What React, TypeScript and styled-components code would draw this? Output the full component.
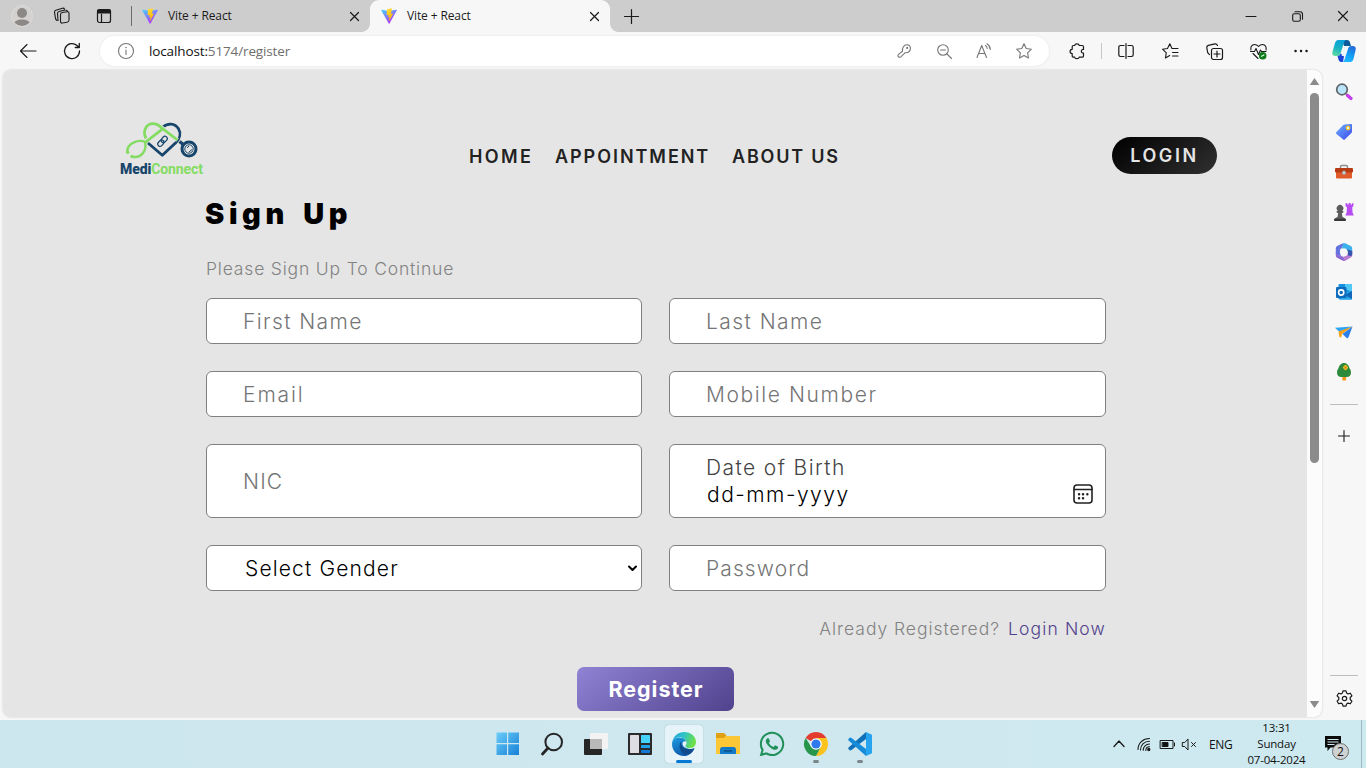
import React from "react";
import styled, { createGlobalStyle } from "styled-components";
import { FaWhatsapp } from "react-icons/fa";

const ui = `"Open Sans", "Noto Sans", sans-serif`;
const brand = `Inter, "Liberation Sans", sans-serif`;

const GlobalStyle = createGlobalStyle`
  * { box-sizing: border-box; }
  body { margin: 0; overflow: hidden; }
  svg { display: block; overflow: visible; flex: none; }
`;

const Screen = styled.div`
  width: 1366px;
  height: 768px;
  display: flex;
  flex-direction: column;
  background: #f7f7f7;
  font-family: ${ui};
  color: #111;
`;

/* ---------- browser chrome ---------- */

const TabStrip = styled.div`
  display: flex;
  align-items: center;
  height: 32px;
  flex: none;
  background: #cdcdcd;
`;

const Slot = styled.div<{ $w: number }>`
  width: ${(p) => p.$w}px;
  height: 100%;
  flex: none;
  display: flex;
  align-items: center;
  justify-content: center;
`;

const Spacer = styled.div`
  flex: 1;
`;

const VLine = styled.div<{ $h: number; $c: string }>`
  width: 1px;
  height: ${(p) => p.$h}px;
  background: ${(p) => p.$c};
`;

const Tab = styled.div<{ $active?: boolean }>`
  position: relative;
  display: flex;
  align-items: center;
  height: 32px;
  width: ${(p) => (p.$active ? 240 : 236)}px;
  padding: 0 10px 0 ${(p) => (p.$active ? 11 : 8)}px;
  background: ${(p) => (p.$active ? "#f7f7f7" : "transparent")};
  border-radius: 9px 9px 0 0;
  ${(p) =>
    p.$active &&
    `
    &::before, &::after {
      content: "";
      position: absolute;
      bottom: 0;
      width: 8px;
      height: 8px;
    }
    &::before {
      left: -8px;
      background: radial-gradient(circle at 0 0, transparent 7.5px, #f7f7f7 8px);
    }
    &::after {
      right: -8px;
      background: radial-gradient(circle at 100% 0, transparent 7.5px, #f7f7f7 8px);
    }
  `}
`;

const TabTitle = styled.span`
  flex: 1;
  margin-left: 10px;
  font-size: 12px;
  letter-spacing: -0.12px;
  line-height: 16px;
  color: #1b1b1b;
`;

const Toolbar = styled.div`
  display: flex;
  align-items: center;
  height: 38px;
  flex: none;
  background: #f7f7f7;
`;

const AddressBar = styled.div`
  display: flex;
  align-items: center;
  width: 949px;
  height: 30px;
  margin-left: 12px;
  margin-right: 6px;
  padding: 0 5px 0 18px;
  border-radius: 15px;
  background: #fff;
  box-shadow: 0 0 3px rgba(0, 0, 0, 0.08);
`;

const Url = styled.div`
  flex: 1;
  margin-left: 15px;
  font-size: 13.5px;
  letter-spacing: -0.13px;
  line-height: 18px;
  color: #6e6e6e;
  b {
    font-weight: 400;
    color: #111;
  }
`;

const Body = styled.div`
  display: flex;
  height: 650px;
  flex: none;
  padding-left: 3px;
`;

const Frame = styled.div`
  display: flex;
  width: 1319px;
  height: 647px;
  border-radius: 8px;
  overflow: hidden;
  background: #fcfcfc;
  box-shadow: 0 0 2px rgba(0, 0, 0, 0.22);
`;

const Scrollbar = styled.div`
  width: 15px;
  display: flex;
  flex-direction: column;
  align-items: center;
  padding: 8px 0 9px;
`;

const Thumb = styled.div`
  width: 9px;
  height: 370px;
  margin-top: 8px;
  border-radius: 5px;
  background: #8b8b8b;
`;

const SideBar = styled.div`
  width: 44px;
  display: flex;
  flex-direction: column;
  align-items: center;
  padding-top: 2px;
`;

const SideItem = styled.div<{ $h?: number }>`
  height: ${(p) => p.$h ?? 40}px;
  display: flex;
  align-items: center;
  justify-content: center;
`;

const SideRule = styled.div`
  width: 28px;
  height: 1px;
  background: #bdbdbd;
`;

/* ---------- web page ---------- */

const Page = styled.div`
  width: 1304px;
  display: flex;
  flex-direction: column;
  background: #e5e5e5;
  font-family: ${brand};
`;

const Header = styled.header`
  display: grid;
  grid-template-columns: 349px 1fr 105px;
  align-items: center;
  height: 73px;
  margin: 50px 90px 0 117px;
`;

const Logo = styled.div`
  width: 84px;
  margin-top: -18px;
`;

const Wordmark = styled.div`
  display: flex;
  font-family: Roboto, sans-serif;
  font-weight: 700;
  font-size: 14px;
  line-height: 14px;
  letter-spacing: -0.1px;
  color: #84dc62;
  margin-top: 1px;
  b {
    color: #17456b;
  }
`;

const Nav = styled.nav`
  display: flex;
`;

const NavLink = styled.a<{ $w: number; $ls: number }>`
  width: ${(p) => p.$w}px;
  font-size: 18px;
  font-weight: 600;
  line-height: 22px;
  letter-spacing: ${(p) => p.$ls}px;
  white-space: nowrap;
  color: #222;
`;

const LoginButton = styled.button`
  height: 37px;
  margin-top: -1.5px;
  border: 0;
  padding: 0;
  border-radius: 19px;
  background: linear-gradient(140deg, #000, #303030);
  color: #e5e5e5;
  font: 600 18px/38px ${brand};
  letter-spacing: 2.6px;
`;

const Form = styled.form`
  display: flex;
  flex-direction: column;
  width: 900px;
  margin-left: 203px;
`;

const Title = styled.h1`
  margin: 4px 0 0 -1px;
  font-size: 29px;
  font-weight: 900;
  line-height: 34px;
  letter-spacing: 4.6px;
  word-spacing: 4px;
  color: #000;
`;

const Subtitle = styled.p`
  margin: 26px 0 17px;
  font-size: 17.5px;
  line-height: 24px;
  font-weight: 350;
  letter-spacing: 0.82px;
  color: #828282;
`;

const Fields = styled.div`
  display: grid;
  grid-template-columns: 436px 437px;
  grid-template-rows: 46px 46px 74px 46px;
  gap: 27px;
`;

const boxed = `
  border: 1px solid #808080;
  border-radius: 6px;
  background: #fff;
  padding: 0 0 0 36px;
  font-family: ${brand};
  font-size: 21px;
  font-weight: 300;
  outline: none;
  min-width: 0;
`;

const Input = styled.input<{ $ls: number }>`
  ${boxed}
  letter-spacing: ${(p) => p.$ls}px;
  &::placeholder {
    color: #757575;
    opacity: 1;
  }
`;

const DateField = styled.div`
  ${boxed}
  display: flex;
  flex-direction: column;
  justify-content: center;
  line-height: 27px;
  padding-right: 12px;
`;

const DateLabel = styled.label`
  color: #444;
  letter-spacing: 1.4px;
`;

const DateRow = styled.div`
  display: flex;
  justify-content: space-between;
  align-items: center;
  height: 27px;
  padding-left: 1px;
  letter-spacing: 1.5px;
  color: #000;
  svg {
    margin-top: -2px;
  }
`;

const SelectField = styled.div`
  ${boxed}
  display: flex;
  align-items: center;
  justify-content: space-between;
  padding-left: 38px;
  padding-right: 4px;
  letter-spacing: 1.15px;
  color: #000;
`;

const Hint = styled.div`
  display: flex;
  justify-content: flex-end;
  margin-top: 26px;
  font-size: 17.5px;
  font-weight: 350;
  line-height: 24px;
  letter-spacing: 0.96px;
  color: #828282;
  a {
    margin: 0 0 0 8px;
    letter-spacing: 1.15px;
    color: #50428c;
  }
`;

const RegisterButton = styled.button`
  align-self: center;
  width: 157px;
  height: 44px;
  margin: 26px 2px 0 0;
  border: 0;
  border-radius: 7px;
  background: linear-gradient(140deg, #9083d5, #50428c);
  color: #fff;
  font: 700 21.5px/42px ${brand};
  letter-spacing: 0.95px;
  padding: 0 0 0 2px;
`;

/* ---------- taskbar ---------- */

const Taskbar = styled.div`
  display: flex;
  align-items: center;
  height: 48px;
  flex: none;
  padding-left: 486px;
  background: linear-gradient(90deg, #cde7ef, #cfe7ee 60%, #cdeaf0);
`;

const TaskItem = styled.div<{ $active?: boolean }>`
  position: relative;
  width: 38px;
  height: 38px;
  margin: 0 3px;
  display: flex;
  align-items: center;
  justify-content: center;
  border-radius: 4px;
  background: ${(p) => (p.$active ? "#e6f3f8" : "transparent")};
  box-shadow: ${(p) => (p.$active ? "0 0 1px rgba(0,60,80,.35)" : "none")};
`;

const Marker = styled.i<{ $active?: boolean }>`
  position: absolute;
  left: 50%;
  bottom: 0;
  width: ${(p) => (p.$active ? 16 : 6)}px;
  height: 3px;
  transform: translateX(-50%);
  border-radius: 2px;
  background: ${(p) => (p.$active ? "#0078d4" : "#7c868a")};
`;

const Lang = styled.span`
  width: 39px;
  padding-left: 9px;
  font-size: 12px;
  letter-spacing: -0.3px;
`;

const Clock = styled.div`
  width: 75px;
  margin-right: 8px;
  text-align: center;
  font-size: 11.5px;
  line-height: 16px;
  letter-spacing: -0.2px;
`;

const Notify = styled.div`
  position: relative;
  width: 22px;
  height: 30px;
  padding-top: 7px;
  margin-left: 3px;
`;

const Badge = styled.span`
  position: absolute;
  left: 7px;
  top: 14px;
  width: 17px;
  height: 17px;
  border: 1px solid #707070;
  border-radius: 50%;
  background: #cfd2d3;
  font-size: 12px;
  line-height: 15px;
  text-align: center;
`;

/* ---------- drawings ---------- */

type LineProps = { s?: number; c?: string; w?: number; children: React.ReactNode };
const Line = ({ s = 16, c = "#1a1a1a", w = 1.1, children }: LineProps) => (
  <svg width={s} height={s} viewBox={`0 0 ${s} ${s}`} fill="none" stroke={c} strokeWidth={w} strokeLinecap="round" strokeLinejoin="round">
    {children}
  </svg>
);

const ViteLogo = ({ id }: { id: string }) => (
  <svg width="16" height="16" viewBox="0 0 32 32">
    <defs>
      <linearGradient id={`${id}a`} x1="0" y1="0" x2="0.6" y2="1">
        <stop offset="0" stopColor="#41d1ff" />
        <stop offset="1" stopColor="#b530fe" />
      </linearGradient>
      <linearGradient id={`${id}b`} x1="0.4" y1="0" x2="0.6" y2="1">
        <stop offset="0" stopColor="#ffdd35" />
        <stop offset="1" stopColor="#ffa800" />
      </linearGradient>
    </defs>
    <path d="M31.5 5 17 31c-.4.7-1.200.7-1.600 0L.6 5c-.4-.8.2-1.600 1-1.400L16 6.200l14.500-2.600c.9-.2 1.500.7 1 1.400z" fill={`url(#${id}a)`} />
    <path d="M22.500.6 12.300 2.600a.5.5 0 0 0-.4.400L11.300 14c0 .3.300.5.500.4l3-.6c.3 0 .5.200.5.500l-.9 4.200c0 .3.200.6.500.500l1.800-.6c.3 0 .6.200.5.500l-1.400 6.700c0 .4.500.6.700.3L24 11.400c.1-.3-.1-.7-.4-.6l-3 .6a.5.5 0 0 1-.5-.6l2-9.600c0-.3-.2-.6-.6-.600z" fill={`url(#${id}b)`} />
  </svg>
);

const CloseMark = ({ s = 12 }: { s?: number }) => (
  <Line s={s} w={1.2}>
    <path d={`M1.500 1.500 ${s - 1.5} ${s - 1.5}M${s - 1.5} 1.500 1.500 ${s - 1.5}`} />
  </Line>
);

const Avatar = () => (
  <svg width="22" height="22" viewBox="0 0 22 22">
    <defs>
      <clipPath id="av"><circle cx="11" cy="11" r="10" /></clipPath>
    </defs>
    <circle cx="11" cy="11" r="10.500" fill="#d4d2d0" stroke="#dedcda" strokeWidth="1" />
    <g clipPath="url(#av)" fill="#8c8886">
      <circle cx="11" cy="8" r="5" />
      <ellipse cx="11" cy="18.500" rx="8" ry="4" />
    </g>
  </svg>
);

const Workspaces = () => (
  <Line s={18}>
    <rect x="7.500" y="5" width="8.500" height="10.500" rx="1.800" transform="skewY(-9) translate(0 2)" />
    <path d="M5 13.500 4.500 6.500c0-1 .5-1.700 1.500-2l6-1.500" />
    <path d="M2.500 11.500 1.500 5.200c-.1-1 .3-1.700 1.300-2L9.500 1.200c1-.2 1.700 0 2 1M13 3.200c.8 0 1.200.4 1.300 1" />
    <path d="M2.500 11.500c.3 1 .8 1.600 1.600 2" />
  </Line>
);

const TabActions = () => (
  <Line s={16} w={1.2}>
    <rect x="1.500" y="1.500" width="13" height="13" rx="2" />
    <path d="M2 2.500h12v2H2z" fill="#111" strokeWidth="1.800" />
    <path d="M5.500 6v8.500" />
  </Line>
);

const Copilot = () => (
  <svg width="24" height="24" viewBox="0 0 24 24">
    <defs>
      <linearGradient id="cp1" x1="0.5" y1="0" x2="0.2" y2="1">
        <stop offset="0" stopColor="#0aa0d8" />
        <stop offset="0.5" stopColor="#18b2c4" />
        <stop offset="1" stopColor="#62dca0" />
      </linearGradient>
      <linearGradient id="cp2" x1="0.8" y1="0" x2="0.3" y2="1">
        <stop offset="0" stopColor="#2468d8" />
        <stop offset="0.6" stopColor="#12a4f8" />
        <stop offset="1" stopColor="#20b8ff" />
      </linearGradient>
    </defs>
    <path d="M10 1h5c2 0 2.500 1 3 2.500L19 7h-7z" fill="#0c5a98" />
    <path d="M6.500 1H15c-2 0-2.600 1-3.200 3L8.500 14.500c-.6 1.800-1.400 2.500-3 2.500H3.500C.8 17-.2 15.500.4 13L3 4c.7-2 1.600-3 3.500-3z" fill="url(#cp1)" />
    <path d="M5.500 17c1.600 0 2.400-.7 3-2.500L12 17l-1 6H9.500c-2 0-2.500-1-3-2.500z" fill="#1c42d8" />
    <path d="M18 23H9.500c2 0 2.600-1 3.200-3L16 9.500c.6-1.800 1.400-2.500 3-2.500h1.500c2.700 0 3.700 1.500 3.100 4L21.500 20c-.7 2-1.600 3-3.500 3z" fill="url(#cp2)" />
    <path d="M15.500 7H19c-1.600 0-2.400.7-3 2.500l-1.800 5.600c-.4 1.300-1 1.900-2 1.900h-2.700l2.500-8c.5-1.400 1.200-2 2.500-2z" fill="#e9f6f8" opacity=".9" />
  </svg>
);

const sideIcons = [
  <svg width="18" height="18" viewBox="0 0 18 18" key="search">
    <path d="m11 11 5.500 5" stroke="#666" strokeWidth="2" />
    <path d="m12.500 12.500 3.500 3" stroke="#c33cf0" strokeWidth="3.200" strokeLinecap="round" />
    <circle cx="7" cy="6.500" r="5.300" fill="#b9e5fb" stroke="#606468" strokeWidth="1.700" />
  </svg>,
  <svg width="18" height="18" viewBox="0 0 18 18" key="tag">
    <defs><linearGradient id="tg" x1="0" y1="0" x2="1" y2="1"><stop offset="0" stopColor="#6cb4fb" /><stop offset="1" stopColor="#3b45f0" /></linearGradient></defs>
    <path d="M9.500 1.500 16 1c.7 0 1 .3 1 1v6.500c0 .6-.2 1-.6 1.400L10 16.300c-.7.700-1.400.7-2 0L1.500 11c-.7-.7-.7-1.500 0-2.100L8 2.200c.4-.4.900-.6 1.500-.7z" fill="url(#tg)" />
    <circle cx="13" cy="5" r="1.800" fill="#dff" stroke="#f0c020" strokeWidth="1.200" />
  </svg>,
  <svg width="18" height="18" viewBox="0 0 18 18" key="box">
    <path d="M5.500 6V3.800c0-.8.4-1.300 1.200-1.300h4.600c.8 0 1.200.5 1.200 1.300V6" fill="none" stroke="#8c8c8c" strokeWidth="1.400" />
    <rect x="1" y="8" width="16" height="7.500" rx="1" fill="#e2592a" />
    <rect x="0" y="5" width="18" height="4.500" rx="1" fill="#b63a13" />
    <rect x="7.300" y="8" width="3.400" height="3.500" rx="1" fill="#ccc" stroke="#888" strokeWidth=".5" />
  </svg>,
  <svg width="20" height="20" viewBox="0 0 20 20" key="chess">
    <path d="M11.500 3V1.200h1.800v1.400h1.300V1h2v1.600H18V1.200h1.500V3c0 1.300-.8 2-1.300 2.600l.4 5.400c.6.500 1 1.400 1 2.500h-8c0-1.100.4-2 1-2.500l.4-5.400C12.300 5 11.500 4.300 11.500 3z" fill="#b94bf3" />
    <path d="M2.500 9.800c0-.7.700-1 1.300-1.100a3.300 3.300 0 1 1 4.400 0c.6.100 1.300.4 1.300 1.100 0 .8-.9 1.200-1.700 1.300l.7 4c1.800.4 3 1.300 3 2.900 0 .6-.4 1-1 1H1.500c-.6 0-1-.4-1-1 0-1.600 1.200-2.500 3-2.900l.7-4c-.8-.1-1.700-.5-1.700-1.300z" fill="#5c5c5c" />
    <path d="M1 17.800h10" stroke="#383838" strokeWidth="2.200" strokeLinecap="round" />
  </svg>,
  <svg width="18" height="18" viewBox="0 0 18 18" key="m365">
    <path d="M.8 5.500c0-1.200.4-1.900 1.400-2.500L7.300.6C8.800 1.500 8 4 6 5.500c-1.500 1.500-1.500 5 .5 8L2.500 12C1.300 11.500.8 11 .8 10z" fill="#6373dd" />
    <path d="M.8 9v3.500c0 1.100.4 1.700 1.300 2.200L7.500 17.500c1 .6 2 .6 3 0L8 13.500C5 13.500 2 12 .8 9z" fill="#8a68d4" />
    <path d="M7.300.6c1.200-.7 2.200-.7 3.400 0L15.800 3c1 .6 1.400 1.300 1.400 2.500v4.700l-4.400.3c.4-3-1-5-3.800-5H6C8 4 8.800 2 7.300.6z" fill="#3db2ea" />
    <path d="M17.200 8.500V12c0 1.300-.4 2-1.400 2.600l-5.100 2.900c-1 .6-2.200.6-3.200 0 2-.6 2-2 1-4 3 .2 4.300-1.500 4.300-3.500z" fill="#b67ad0" />
    <path d="M12 6.300 17.200 8v4c-1 1.500-3.300 1.300-4.400-.5.3-2 .2-3.700-.8-5.200z" fill="#3556ac" />
    <path d="M7.300 6h3.400l1.800 3-1.800 3H7.300L5.500 9z" fill="#f7f7f7" stroke="#f7f7f7" strokeWidth=".5" strokeLinejoin="round" />
  </svg>,
  <svg width="18" height="18" viewBox="0 0 18 18" key="outlook">
    <rect x="3.500" y="1" width="13.500" height="15.500" rx="1" fill="#1490df" />
    <path d="M10 1h6.500c.5 0 .5.200.5.700V9l-7-3z" fill="#50c8f4" />
    <path d="m6 10 11-2v8.500H6z" fill="#28a8ea" />
    <path d="m10 12 7-4v8z" fill="#1066b8" />
    <rect x="1" y="4" width="10.500" height="11" rx="1" fill="#0f6cbd" />
    <circle cx="6.200" cy="9.500" r="2.600" fill="none" stroke="#fff" strokeWidth="1.600" />
  </svg>,
  <svg width="18" height="18" viewBox="0 0 18 18" key="drop">
    <path d="M0 4.800 17.500 3.500 5 9.500z" fill="#2fa4f4" />
    <path d="M3.500 8.500 17.500 3.500 7 11l-.8 3.500c-1.600 0-2-.8-2.200-2z" fill="#f5a31c" />
    <path d="M17.500 3.500 13.500 14.300c-.3.900-1 1.100-1.800.7L7.500 11z" fill="#2b7fea" />
  </svg>,
  <svg width="18" height="20" viewBox="0 0 18 20" key="tree">
    <path d="M7.300 12h3.800v5.500c0 .6-.4 1-1 1H8.300c-.6 0-1-.4-1-1z" fill="#f39a1d" />
    <path d="M9 1c3 0 5 2.800 5.500 5.200C15.600 7.500 16 9 16 10.500c0 3-1.800 4.500-4.500 4.500h-5C3.800 15 2 13.500 2 10.500 2 9 2.400 7.500 3.500 6.200 4 3.800 6 1 9 1z" fill="#2d8a3c" />
    <path d="M10.500 3v5M8 5.500h5" stroke="#f7c21b" strokeWidth="2.200" />
    <circle cx="10.500" cy="5.500" r=".9" fill="#d96d10" />
  </svg>,
];

const LogoMark = () => (
  <svg width="84" height="42" viewBox="0 0 84 42" fill="none" strokeLinejoin="round">
    <path d="M28 24 42.300 36.300 56 23.500C60 19.500 61 14 58.500 9.800 55 4 47.500 3.700 42.500 8.500" stroke="#17456b" strokeWidth="2.800" />
    <path d="M57.500 21 41 8.300C36 3.200 29 3.500 26 8.500c-1.900 3.300-1.800 7.500 0 11" stroke="#e5e5e5" strokeWidth="4.400" />
    <path d="M57.500 21 41 8.300C36 3.200 29 3.500 26 8.500c-1.900 3.300-1.800 7.500 0 11" stroke="#84dc62" strokeWidth="2.800" />
    <path d="M24.500 24 42 10.300" stroke="#84dc62" strokeWidth="2.800" />
    <path d="M25.500 23c-4-1.700-8-1.400-11.500.3C9 25.500 7 28.500 7.300 33" stroke="#84dc62" strokeWidth="2.400" />
    <path d="M25 23.500c1.200 4 .3 7.500-2 10.500-2.500 3.300-6 4.700-10.500 3.800" stroke="#84dc62" strokeWidth="2.400" />
    <circle cx="7.700" cy="33.200" r="1.700" fill="#84dc62" />
    <circle cx="12" cy="37.500" r="1.700" fill="#84dc62" />
    <path d="m59.500 22.500 5 4" stroke="#17456b" strokeWidth="3.500" />
    <circle cx="69" cy="30" r="7" stroke="#17456b" strokeWidth="3" />
    <circle cx="69" cy="30" r="4.200" stroke="#17456b" strokeWidth="1" />
    <path d="m67 29 2-2M69 33l3-2.500" stroke="#17456b" />
    <g stroke="#17456b" strokeWidth="1.200" transform="rotate(-48 42.500 22.300)">
      <rect x="36.500" y="20" width="7" height="4.600" rx="2.300" />
      <rect x="41.500" y="20" width="7" height="4.600" rx="2.300" />
    </g>
  </svg>
);

const CalendarIcon = () => (
  <Line s={20} c="#222" w={1.6}>
    <rect x="1" y="1" width="18" height="18" rx="3" />
    <path d="M1 5.500h18" />
    <path d="M6 10.300h.1M10 10.300h.1M14.300 10.300h.1M6 14.300h.1M10 14.300h.1" strokeWidth="2.400" />
  </Line>
);

const StartIcon = () => (
  <svg width="24" height="24" viewBox="0 0 24 24">
    <defs><linearGradient id="win" x1="0" y1="0" x2="1" y2="1"><stop offset="0" stopColor="#6bcdf8" /><stop offset="1" stopColor="#1680d8" /></linearGradient></defs>
    <path d="M.5.500H11V11H.5zM12.200.5h10.800V11H12.200zM.5 12.200H11V23H.5zM12.200 12.200h10.800V23H12.200z" fill="url(#win)" />
  </svg>
);

const EdgeIcon = () => (
  <svg width="24" height="24" viewBox="0 0 24 24">
    <defs>
      <linearGradient id="eg1" x1="0" y1="0" x2="1" y2="0.3"><stop offset="0" stopColor="#249fdc" /><stop offset="0.5" stopColor="#2dc3c8" /><stop offset="1" stopColor="#6be04b" /></linearGradient>
      <linearGradient id="eg2" x1="0" y1="0" x2="0.5" y2="1"><stop offset="0" stopColor="#1b9de2" /><stop offset="1" stopColor="#0d56a8" /></linearGradient>
    </defs>
    <path d="M0 12C0 7.500 3.500 5.500 7.500 5.500c4.500 0 7 3 7 5.500 0 1-.5 1.800-1 2.500-.7 1 .6 3.500 5 3.500 2 0 3.300-.5 4-.8C20.800 21 16.500 24 12 24 5 24 0 18.500 0 12z" fill="url(#eg2)" />
    <path d="M.2 10.500C1.200 4 6.500 0 12.200 0 19 0 24 4.800 24 10c0 3.800-2.800 6.200-6.200 6.200-2.800 0-4.800-1-4.300-2.700.5-.8 1-1.500 1-2.500 0-3-3-5.700-7-5.700C3.700 5.300 1 7.500.2 10.500z" fill="url(#eg1)" />
    <path d="M9 9.500c-2.500 3.500-1.500 9.500 2.500 12 3.500 2 8 .7 11-5.300-6 2.500-12 .3-13-3-.4-1.500-.2-2.500-.5-3.700z" fill="#114a8b" />
    <path d="M11 10c1.500-1.300 3.500-.5 3.500 1 0 1-.5 1.800-1 2.500-.5.900 0 2 1.500 2.700-3-.2-5.500-3.500-4-6.200z" fill="#e6f3f8" />
  </svg>
);

const ChromeIcon = () => (
  <svg width="24" height="24" viewBox="0 0 24 24">
    <path d="M12 12 1.600 6A12 12 0 0 1 22.400 6z" fill="#e33b2e" />
    <path d="M12 6h10.400A12 12 0 0 1 12 24l4.800-9.300z" fill="#fcc31e" />
    <path d="M1.600 6l5.600 8.700h9.600L12 24A12 12 0 0 1 1.600 6z" fill="#27964a" />
    <circle cx="12" cy="12" r="5.800" fill="#fff" />
    <circle cx="12" cy="12" r="4.600" fill="#3079ed" />
  </svg>
);

const Item = ({ children, active, open }: { children: React.ReactNode; active?: boolean; open?: boolean }) => (
  <TaskItem $active={active}>
    {children}
    {(active || open) && <Marker $active={active} />}
  </TaskItem>
);

const grey = "#767676";

export default function App() {
  return (
    <Screen>
      <GlobalStyle />
      <TabStrip>
        <Slot $w={44}><Avatar /></Slot>
        <Slot $w={36}><Workspaces /></Slot>
        <Slot $w={48}><TabActions /></Slot>
        <Slot $w={6}><VLine $h={20} $c="#6c6c6c" /></Slot>
        <Tab>
          <ViteLogo id="v1" />
          <TabTitle>Vite + React</TabTitle>
          <CloseMark s={11} />
        </Tab>
        <Tab $active>
          <ViteLogo id="v2" />
          <TabTitle>Vite + React</TabTitle>
          <CloseMark s={11} />
        </Tab>
        <Slot $w={43}>
          <Line s={15} w={1.2}><path d="M7.500.5v14M.5 7.500h14" /></Line>
        </Slot>
        <Spacer />
        <Slot $w={46}><Line s={10} w={1}><path d="M0 5.500h10" /></Line></Slot>
        <Slot $w={46}>
          <Line s={11} w={1.1}>
            <rect x=".7" y="2.700" width="7.600" height="7.600" rx="1.500" />
            <path d="M3 .7h5c1.500 0 2.500 1 2.500 2.500v5" />
          </Line>
        </Slot>
        <Slot $w={46}><CloseMark s={12} /></Slot>
      </TabStrip>

      <Toolbar>
        <Slot $w={56}>
          <Line s={16}><path d="M.5 8h15.500M7 1.500.5 8 7 14.500" /></Line>
        </Slot>
        <Slot $w={32}>
          <Line s={16} w={1.3}><path d="M15.500 8A7.500 7.500 0 1 1 13 2.500l2 1.800M15.300.5v4h-4" /></Line>
        </Slot>
        <AddressBar>
          <Line s={16} c={grey}>
            <circle cx="8" cy="8" r="7.500" />
            <path d="M8 7v4.500" /><path d="M8 4.500h.01" strokeWidth="1.600" />
          </Line>
          <Url><b>localhost:</b>5174/register</Url>
          <Slot $w={40}>
            <Line s={14} c={grey}>
              <path d="M5.500 7.200C5 4 7 .8 9.800.8c2.200 0 3.600 1.700 3.600 3.700 0 2.700-2.400 4.700-5.200 4.200L3.800 12.800c-.9.800-2.900.5-2.900-1.100 0-.6.200-1 .6-1.300z" />
              <circle cx="10.200" cy="3.900" r=".5" />
            </Line>
          </Slot>
          <Slot $w={40}>
            <Line s={15} c={grey}><circle cx="6" cy="6" r="5.300" /><path d="m10 10 4.500 4.500M3.500 6h5" /></Line>
          </Slot>
          <Slot $w={40}>
            <Line s={16} c={grey}>
              <path d="M1 14.500 5.700 2.500l4.800 12M2.600 10.500h6.300M9.500 2.500c1 .7 1.600 1.800 1.700 3M11 .8C13 2 14.200 4 14.300 6.500" />
            </Line>
          </Slot>
          <Slot $w={40}>
            <Line s={16} c={grey}><path d="m8 .8 2.200 4.700 5.200.7-3.800 3.600.9 5.200L8 12.500 3.500 15l.9-5.200L.6 6.200l5.200-.7z" /></Line>
          </Slot>
        </AddressBar>
        <Slot $w={44}>
          <Line s={16} w={1.2}>
            <path d="M5.700 2.500c.2-2.300 4.300-2.300 4.500 0h3c.7 0 1.300.6 1.300 1.300v2.600c-2.700-.2-3 3.700 0 3.800v2.700c0 .7-.6 1.300-1.300 1.300h-3c-.2 2-4.300 2-4.500 0H4.500c-.7 0-1.300-.6-1.300-1.300v-2.400c-2.700 0-3-4 0-4.200V3.800c0-.7.6-1.300 1.300-1.300z" />
          </Line>
        </Slot>
        <Slot $w={5}><VLine $h={16} $c="#c6c6c6" /></Slot>
        <Slot $w={44}>
          <Line s={16} w={1.2}>
            <path d="M6 2.500H2.500c-1 0-1.700.7-1.700 1.700v7.600c0 1 .7 1.700 1.700 1.700H6M10 2.500h3.500c1 0 1.700.7 1.700 1.700v7.600c0 1-.7 1.700-1.700 1.700H10M8 .5v15" />
          </Line>
        </Slot>
        <Slot $w={44}>
          <Line s={16}>
            <path d="M10 5.500 7.800.8 5.500 5.500.5 6.200l3.800 3.600-.9 5.200 4.300-2.400M10 5.500h6M10.500 9.500H16M10.500 13H16" />
          </Line>
        </Slot>
        <Slot $w={44}>
          <Line s={17} w={1.2}>
            <rect x="5.500" y="5.500" width="11" height="11" rx="2" />
            <path d="M11 8v6M8 11h6M3.500 11.500C2.500 11 2 10.300 1.700 9.500L.8 4.800C.6 3.500 1.200 2.600 2.300 2.300L9 .9c1.200-.2 2 .4 2.500 1.600" />
          </Line>
        </Slot>
        <Slot $w={44}>
          <Line s={17}>
            <path d="M1 7C.3 4.500 1.500 1.500 4.500 1.500c1.700 0 3 .8 4 2 1-1.200 2.300-2 4-2 3 0 4.200 3 3.500 5.500M.5 8.500h4l1.500-3 2.500 6 2-4.500 1 1.500h4.500M3 10.500l5 5" />
            <circle cx="12.700" cy="12.700" r="3.800" fill="#0f7b1d" stroke="none" />
            <path d="m11.500 13.300 2.400-1.400" stroke="#d8f8d8" />
          </Line>
        </Slot>
        <Slot $w={42}>
          <Line s={14}><path d="M1.500 7h.1M7 7h.1M12.500 7h.1" strokeWidth="2.400" /></Line>
        </Slot>
        <Slot $w={44}><Copilot /></Slot>
      </Toolbar>

      <Body>
        <Frame>
          <Page>
            <Header>
              <Logo>
                <LogoMark />
                <Wordmark><b>Medi</b>Connect</Wordmark>
              </Logo>
              <Nav>
                <NavLink $w={86} $ls={2.4}>HOME</NavLink>
                <NavLink $w={177} $ls={1.95}>APPOINTMENT</NavLink>
                <NavLink $w={110} $ls={1.8}>ABOUT US</NavLink>
              </Nav>
              <LoginButton type="button">LOGIN</LoginButton>
            </Header>
            <Form>
              <Title>Sign Up</Title>
              <Subtitle>Please Sign Up To Continue</Subtitle>
              <Fields>
                <Input $ls={1.4} placeholder="First Name" />
                <Input $ls={1.45} placeholder="Last Name" />
                <Input $ls={1.9} placeholder="Email" />
                <Input $ls={1.6} placeholder="Mobile Number" />
                <Input $ls={1.2} placeholder="NIC" />
                <DateField>
                  <DateLabel>Date of Birth</DateLabel>
                  <DateRow>dd-mm-yyyy<CalendarIcon /></DateRow>
                </DateField>
                <SelectField>
                  Select Gender
                  <Line s={9} c="#000" w={2}><path d="m1 2.500 3.500 3.500L8 2.500" /></Line>
                </SelectField>
                <Input $ls={1.1} placeholder="Password" />
              </Fields>
              <Hint>Already Registered?<a>Login Now</a></Hint>
              <RegisterButton type="button">Register</RegisterButton>
            </Form>
          </Page>
          <Scrollbar>
            <svg width="9" height="7" viewBox="0 0 9 7"><path d="M4.500 0 9 6.500q0 .5-.5.500h-8Q0 7 0 6.500z" fill="#8b8b8b" /></svg>
            <Thumb />
            <Spacer />
            <svg width="9" height="7" viewBox="0 0 9 7"><path d="M4.500 7 9 .5Q9 0 8.500 0h-8Q0 0 0 .5z" fill="#8b8b8b" /></svg>
          </Scrollbar>
        </Frame>
        <SideBar>
          {sideIcons.map((icon, i) => <SideItem key={i}>{icon}</SideItem>)}
          <SideItem $h={24}><SideRule /></SideItem>
          <SideItem $h={40}><Line s={12}><path d="M6 .5v11M.5 6h11" /></Line></SideItem>
          <Spacer />
          <SideRule />
          <SideItem $h={44}>
            <Line s={17} w={1.2}>
              <path d="M7 .8h3l.6 2.300 1.400.8 2.300-.7 1.600 2.600-1.700 1.700v2l1.700 1.700-1.600 2.600-2.300-.7-1.400.8-.6 2.300H7l-.6-2.300-1.400-.8-2.300.7-1.600-2.600 1.700-1.700v-2L1.100 5.800l1.600-2.600 2.300.7 1.400-.8z" />
              <circle cx="8.500" cy="8.500" r="2.200" />
            </Line>
          </SideItem>
        </SideBar>
      </Body>

      <Taskbar>
        <Item><StartIcon /></Item>
        <Item>
          <svg width="22" height="24" viewBox="0 0 22 24" fill="none" stroke="#252525">
            <circle cx="12.700" cy="10" r="8.300" strokeWidth="2" />
            <path d="m7 16-5.500 6" strokeWidth="2.800" strokeLinecap="round" />
          </svg>
        </Item>
        <Item>
          <svg width="24" height="24" viewBox="0 0 24 24">
            <rect x="0" y="7" width="18" height="16" rx="1" fill="#262626" />
            <rect x="6" y="1" width="18" height="16" rx="1" fill="#f3f3f3" />
            <path d="M6 7h12v10H6z" fill="#b9b9b9" />
          </svg>
        </Item>
        <Item>
          <svg width="24" height="24" viewBox="0 0 24 24">
            <rect x="0" y="1" width="24" height="22" rx="1" fill="#2b2b2b" />
            <rect x="2" y="3" width="9" height="18" rx=".5" fill="#dedee2" />
            <rect x="13" y="3" width="9" height="8" rx=".5" fill="#46d3fb" />
            <rect x="13" y="13" width="9" height="3" rx=".5" fill="#1ea0ea" />
            <rect x="13" y="18" width="9" height="3" rx=".5" fill="#1478d4" />
          </svg>
        </Item>
        <Item active><EdgeIcon /></Item>
        <Item>
          <svg width="24" height="24" viewBox="0 0 24 24">
            <path d="M0 2c0-.6.400-1 1-1h7l2.500 2.500L8 7H0z" fill="#dfa011" />
            <path d="M0 6h7.500L10 4h13c.6 0 1 .4 1 1v17H0z" fill="#fbc736" />
            <path d="M4 22v-4.500c0-1.500 1-2.500 2.500-2.500h11c1.500 0 2.500 1 2.500 2.500V22z" fill="#137ac8" />
            <path d="M8 19h8" stroke="#0a5a9c" strokeWidth="2" />
          </svg>
        </Item>
        <Item><FaWhatsapp size={28} color="#20905b" /></Item>
        <Item open><ChromeIcon /></Item>
        <Item open>
          <svg width="24" height="24" viewBox="0 0 24 24">
            <path d="m18 0 6 2.800v18.400L18 24z" fill="#27a4f0" />
            <path d="M18 0v7L3.500 18 2 18.400.3 17V15.800z" fill="#1070b8" />
            <path d="M18 24v-7L3.500 6 2 5.600.3 7v1.200z" fill="#168bd8" />
          </svg>
        </Item>
        <Spacer />
        <Slot $w={24}><Line s={12} w={1.3}><path d="m1 8.500 5-5.500 5 5.500" /></Line></Slot>
        <Slot $w={25}>
          <Line s={14} w={1.1}>
            <path d="M1 12.500C1 6 6 1.500 12.500 1.500M3.500 13C3.500 8 7.500 4.200 12.500 4.200M6.200 13.300c0-3.500 2.800-6.300 6.300-6.300M8.800 13.500c0-2.200 1.700-3.800 3.700-3.800" />
            <circle cx="11.800" cy="12.500" r="1.100" fill="#111" />
          </Line>
        </Slot>
        <Slot $w={23}>
          <Line s={15} w={1}>
            <rect x=".5" y="3.500" width="12.500" height="8" /><path d="M14.500 6v3" /><path d="M2.500 5.500H8v4H2.500z" fill="#111" />
          </Line>
        </Slot>
        <Slot $w={21}>
          <Line s={15} w={1}>
            <path d="M.7 5.500h2L6 2v11L2.700 9.500h-2zM9.500 5.500l4 4M13.500 5.500l-4 4" />
          </Line>
        </Slot>
        <Lang>ENG</Lang>
        <Clock>13:31<br />Sunday<br />07-04-2024</Clock>
        <Notify>
          <svg width="16" height="16" viewBox="0 0 16 16">
            <path d="M0 0h16v11.500H5.500L2.500 15v-3.500H0z" fill="#0b0b0b" />
            <path d="M2.500 3.500h11M2.500 6h11M2.500 8.500h7" stroke="#cfe7ee" strokeWidth="1" />
          </svg>
          <Badge>2</Badge>
        </Notify>
        <Slot $w={19}><Spacer /><VLine $h={48} $c="#9fb9c2" /><Slot $w={4} /></Slot>
      </Taskbar>
    </Screen>
  );
}
